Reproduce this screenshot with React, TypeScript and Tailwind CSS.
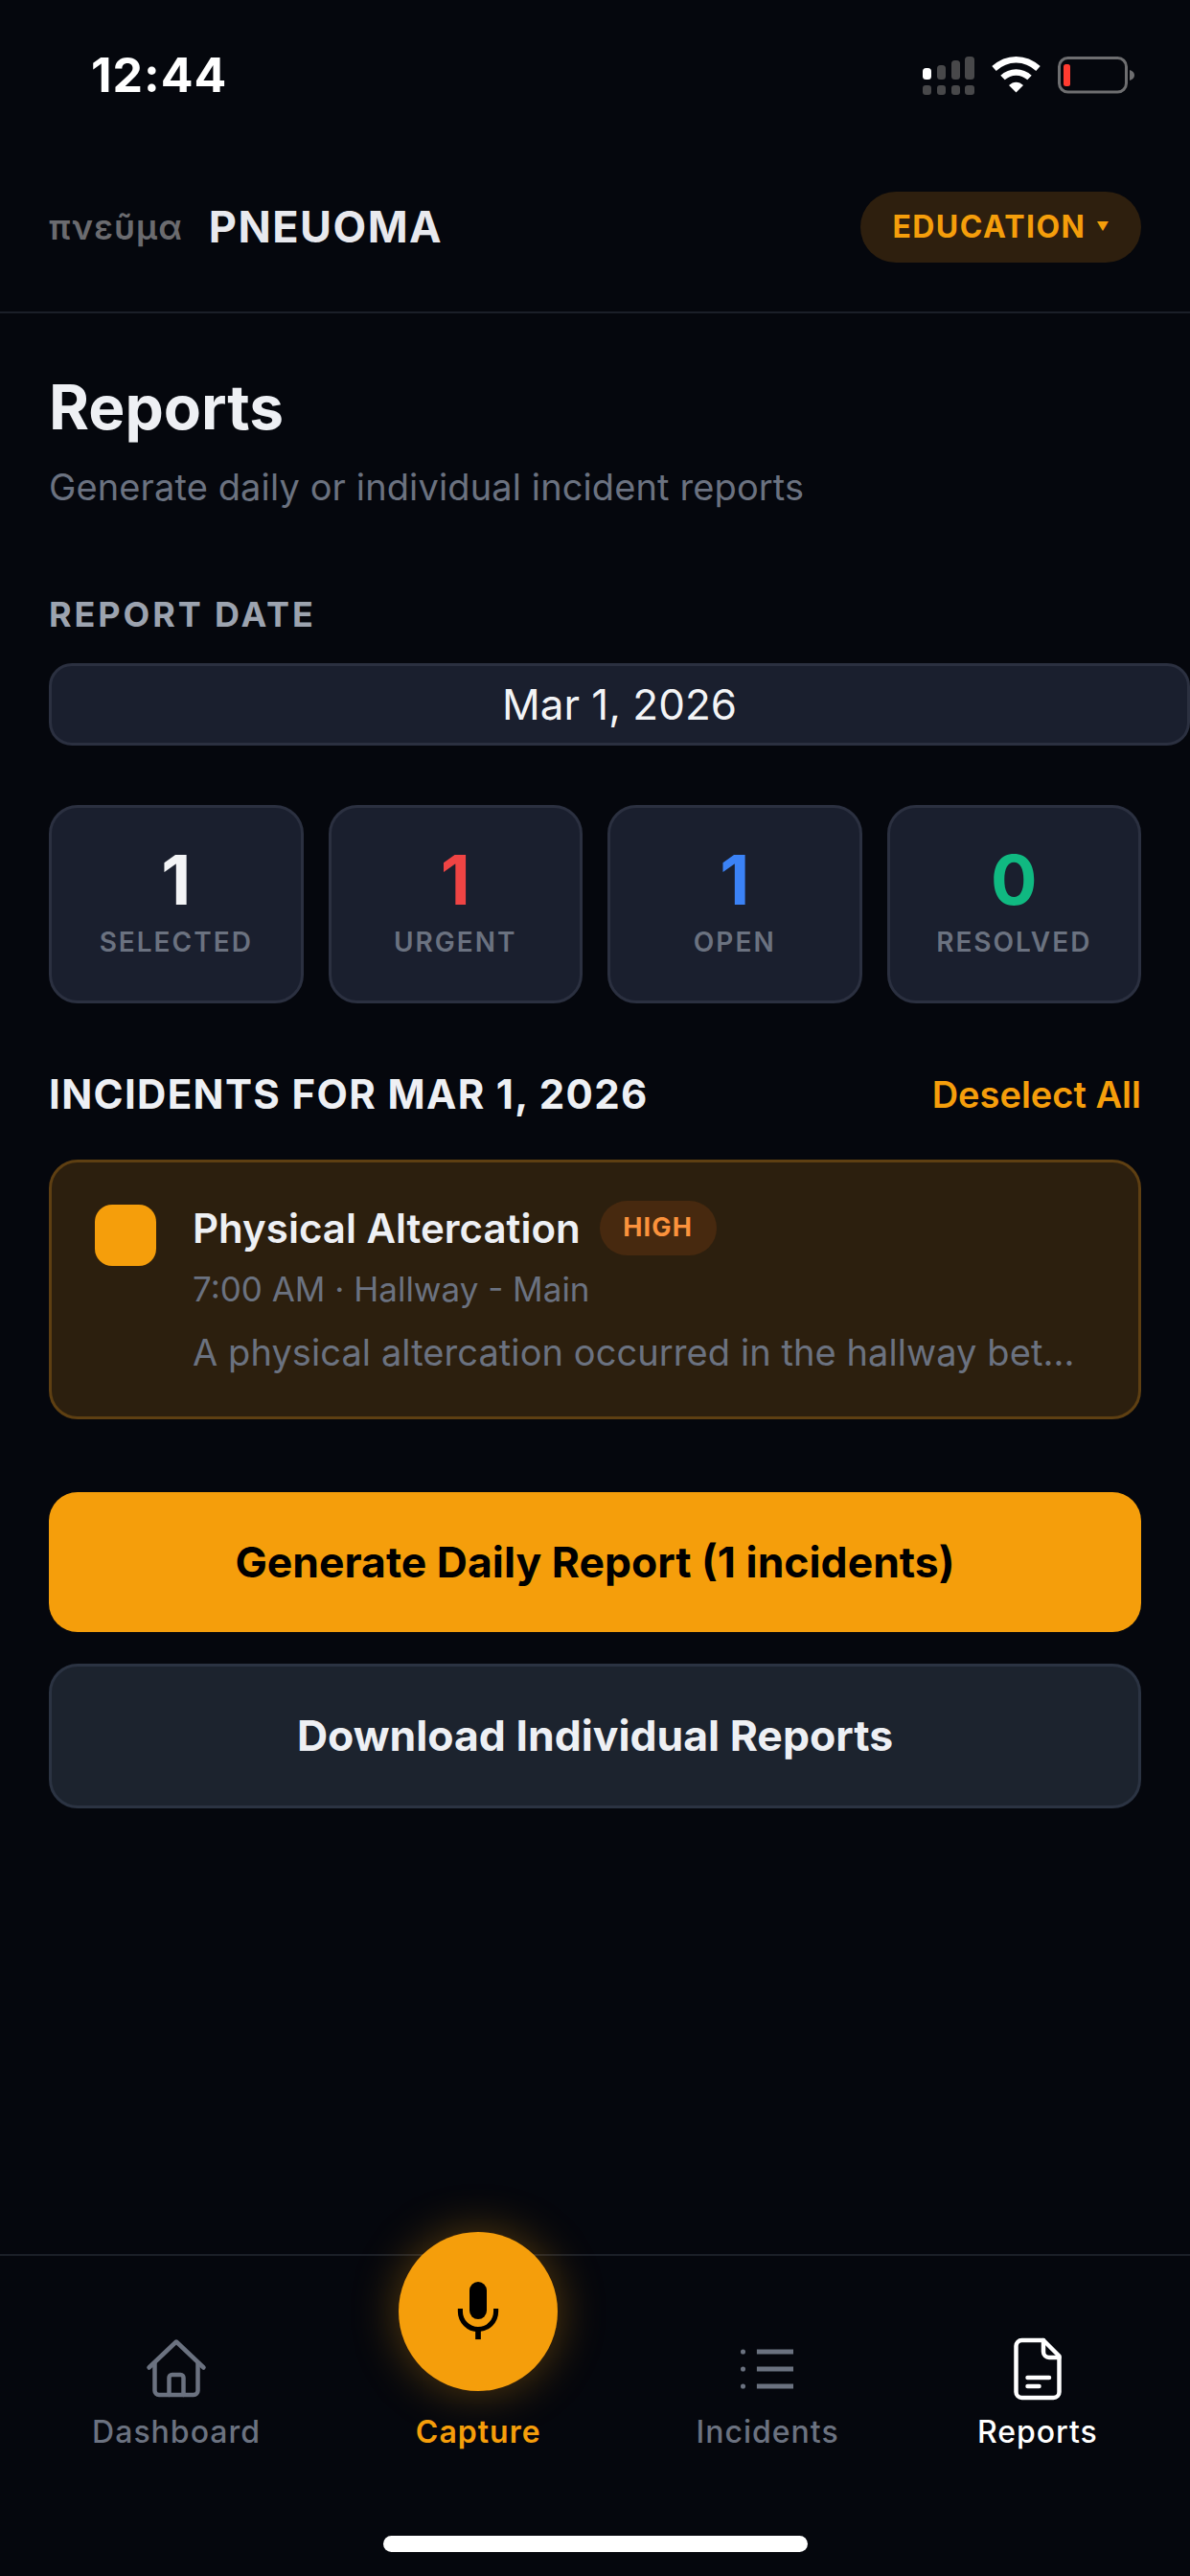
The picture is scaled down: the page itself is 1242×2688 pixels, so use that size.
const stats = [
  { value: '1', label: 'SELECTED', color: 'text-[#f3f4f6]' },
  { value: '1', label: 'URGENT', color: 'text-[#ef4444]' },
  { value: '1', label: 'OPEN', color: 'text-[#3b82f6]' },
  { value: '0', label: 'RESOLVED', color: 'text-[#10b981]' },
];

function StatusIcons() {
  return (
    <svg width="250" height="55" viewBox="940 50 250 55" fill="none">
      <rect x="963" y="71" width="9" height="12" rx="3.5" fill="#fff" />
      <rect x="978" y="68" width="9" height="15" rx="3.5" fill="#48484a" />
      <rect x="993" y="63" width="9" height="20" rx="3.5" fill="#48484a" />
      <rect x="1007" y="59" width="10" height="24" rx="3.5" fill="#48484a" />
      <rect x="963" y="89" width="9" height="10" rx="3" fill="#48484a" />
      <rect x="978" y="89" width="9" height="10" rx="3" fill="#48484a" />
      <rect x="993" y="89" width="9" height="10" rx="3" fill="#48484a" />
      <rect x="1007" y="89" width="10" height="10" rx="3" fill="#48484a" />
      <path d="M1037.5 71.5C1051 59 1070 59 1083.5 71.5" stroke="#fff" strokeWidth="6.5" />
      <path d="M1046.5 81C1054.5 73.5 1066.5 73.5 1074.5 81" stroke="#fff" strokeWidth="6.5" />
      <path d="M1053 89C1057.5 84.5 1063.5 84.5 1068 89L1060.5 96.5Z" fill="#fff" />
      <rect x="1105.5" y="60.5" width="70" height="35.5" rx="9" stroke="#6e6e70" strokeWidth="3" />
      <rect x="1110" y="67" width="7" height="23" rx="2.5" fill="#ff3b30" />
      <path d="M1179 73C1182.5 74 1184 76 1184 78.5C1184 81 1182.5 83 1179 84Z" fill="#6e6e70" />
    </svg>
  );
}

function HomeIcon() {
  return (
    <svg width="72" height="72" viewBox="0 0 24 24" fill="none" stroke="#6b7280" strokeWidth="1.5" strokeLinejoin="round" strokeLinecap="round">
      <path d="M2.5 11.5 12 2.5l9.5 9" />
      <path d="M4.5 10v9.5a1.5 1.5 0 0 0 1.5 1.5h12a1.5 1.5 0 0 0 1.5-1.5V10" />
      <path d="M9.5 21v-6a1 1 0 0 1 1-1h3a1 1 0 0 1 1 1v6" />
    </svg>
  );
}

function MicIcon() {
  return (
    <svg width="72" height="72" viewBox="0 0 24 24" fill="none" stroke="#000">
      <rect x="9" y="1.700" width="6" height="13" rx="3" fill="#000" stroke="none" />
      <path d="M5.800 11v1a6.200 6.200 0 0 0 12.400 0v-1" strokeWidth="1.700" />
      <path d="M12 18v3.700" strokeWidth="1.900" />
    </svg>
  );
}

function ListIcon() {
  return (
    <svg width="72" height="72" viewBox="0 0 24 24" fill="none" stroke="#6b7280" strokeWidth="1.6">
      <path d="M8.300 6H21M8.300 12H21M8.300 18H21" />
      <circle cx="3.500" cy="6" r="0.85" fill="#6b7280" stroke="none" />
      <circle cx="3.500" cy="12" r="0.85" fill="#6b7280" stroke="none" />
      <circle cx="3.500" cy="18" r="0.85" fill="#6b7280" stroke="none" />
    </svg>
  );
}

function FileIcon() {
  return (
    <svg width="72" height="72" viewBox="0 0 24 24" fill="none" stroke="#fff" strokeWidth="1.5" strokeLinejoin="round" strokeLinecap="round">
      <path d="M14 2H6.500A2 2 0 0 0 4.500 4v16a2 2 0 0 0 2 2h11a2 2 0 0 0 2-2V7.500Z" />
      <path d="M14 2v4a2 2 0 0 0 2 2h3.500" />
      <path d="M8.500 15h7.500M8.500 18h4" />
    </svg>
  );
}

function NavItem({ icon, label, active }: { icon: React.ReactNode; label: string; active?: boolean }) {
  return (
    <div className="flex flex-col items-center">
      <div className="flex h-[72px] items-center justify-center">{icon}</div>
      <span className={`mt-[12px] text-[32px] leading-[36px] font-medium tracking-[1px] ${active ? 'text-white' : 'text-[#6b7280]'}`}>{label}</span>
    </div>
  );
}

export default function App() {
  return (
    <div className="flex h-[2688px] w-[1242px] flex-col overflow-hidden bg-[#05070d] font-['Inter',sans-serif] text-[#f3f4f6]">
      {/* status bar */}
      <div className="flex h-[200px] items-start justify-between pt-[50px] pr-[52px] pl-[95px]">
        <span className="text-[50px] leading-[56px] font-bold tracking-[1px] text-white">12:44</span>
        <StatusIcons />
      </div>

      {/* header */}
      <div className="flex h-[127px] items-start justify-between border-b-2 border-[#1b1f28] pr-[51px] pl-[51px]">
        <div className="flex h-[74px] items-center">
          <span className="text-[36px] font-semibold tracking-[1px] text-[#6b6b6f]">πνεῦμα</span>
          <span className="ml-[27px] text-[45px] font-bold tracking-[1.5px] text-[#e8e9ee]">PNEUOMA</span>
        </div>
        <div className="flex h-[74px] w-[293px] items-center justify-center rounded-full bg-[#2e1f0e]">
          <span className="text-[32px] font-bold tracking-[1.4px] text-[#f59e0b]">EDUCATION</span>
          <span className="ml-[11px] text-[13px] text-[#f59e0b]">▼</span>
        </div>
      </div>

      {/* reports */}
      <div className="flex-1 px-[51px]">
        <h1 className="mt-[62px] text-[64px] leading-[72px] font-bold text-[#eef0f4]">Reports</h1>
        <p className="mt-[25px] text-[38px] leading-[44px] tracking-[0.12px] text-[#6b7280]">Generate daily or individual incident reports</p>

        <div className="mt-[90px] text-[36px] leading-[42px] font-bold tracking-[2.9px] text-[#9ca3af]">REPORT DATE</div>
        <div className="mt-[30px] flex h-[86px] w-[1191px] items-center justify-center rounded-[24px] border-[3px] border-[#2b3040] bg-[#1a1f2e] text-[44px] text-[#f3f4f6]">
          Mar 1, 2026
        </div>

        <div className="mt-[62px] grid grid-cols-4 gap-[26px]">
          {stats.map((s) => (
            <div key={s.label} className="flex h-[207px] flex-col items-center rounded-[30px] border-[3px] border-[#2b3040] bg-[#1a1f2e] pt-[33px]">
              <span className={`text-[72px] leading-[84px] font-bold ${s.color}`}>{s.value}</span>
              <span className="mt-[6px] text-[28px] leading-[34px] font-semibold tracking-[2px] text-[#6b7280]">{s.label}</span>
            </div>
          ))}
        </div>

        <div className="mt-[71px] flex items-center justify-between">
          <span className="text-[42px] leading-[48px] font-bold tracking-[1.35px] text-[#eef0f4]">INCIDENTS FOR MAR 1, 2026</span>
          <span className="text-[38px] leading-[48px] font-semibold text-[#f59e0b]">Deselect All</span>
        </div>

        <div className="mt-[44px] flex h-[271px] rounded-[30px] border-[3px] border-[#5e3f12] bg-[#2c1f0e] pt-[44px] pl-[45px]">
          <div className="h-[64px] w-[64px] shrink-0 rounded-[18px] bg-[#f59e0b]" />
          <div className="ml-[38px] -mt-[4px]">
            <div className="flex h-[57px] items-center">
              <span className="text-[42px] font-semibold text-[#eef0f4]">Physical Altercation</span>
              <span className="ml-[20px] flex h-[57px] w-[122px] items-center justify-center rounded-full bg-[#47290f] text-[27px] font-bold tracking-[1.2px] text-[#fb923c]">HIGH</span>
            </div>
            <div className="mt-[15px] text-[35px] leading-[40px] text-[#6b7280]">7:00 AM · Hallway - Main</div>
            <div className="mt-[24px] text-[38px] leading-[44px] tracking-[0.08px] text-[#6b7280]">A physical altercation occurred in the hallway bet...</div>
          </div>
        </div>

        <div className="mt-[76px] flex h-[146px] items-center justify-center rounded-[30px] bg-[#f59e0b] text-[44.5px] font-bold text-black">
          Generate Daily Report (1 incidents)
        </div>
        <div className="mt-[33px] flex h-[151px] items-center justify-center rounded-[30px] border-[3px] border-[#2b3342] bg-[#1c232e] text-[44.5px] font-bold text-[#eef0f4]">
          Download Individual Reports
        </div>
      </div>

      {/* tab bar */}
      <div className="flex h-[336px] items-start justify-around border-t-2 border-[#1b1f28] px-[24px] pt-[82px]">
        <NavItem icon={<HomeIcon />} label="Dashboard" />
        <div className="relative flex flex-col items-center pt-[72px]">
          <div className="absolute top-[-107px] flex h-[166px] w-[166px] items-center justify-center rounded-full bg-[#f59e0b] shadow-[0_0_48px_rgba(245,158,11,0.35)]">
            <MicIcon />
          </div>
          <span className="mt-[12px] w-[166px] text-center text-[32px] leading-[36px] font-semibold tracking-[1px] text-[#f59e0b]">Capture</span>
        </div>
        <NavItem icon={<ListIcon />} label="Incidents" />
        <NavItem icon={<FileIcon />} label="Reports" active />
      </div>

      {/* home indicator */}
      <div className="relative h-0">
        <div className="absolute bottom-[25px] left-[400px] h-[17px] w-[443px] rounded-full bg-white" />
      </div>
    </div>
  );
}
